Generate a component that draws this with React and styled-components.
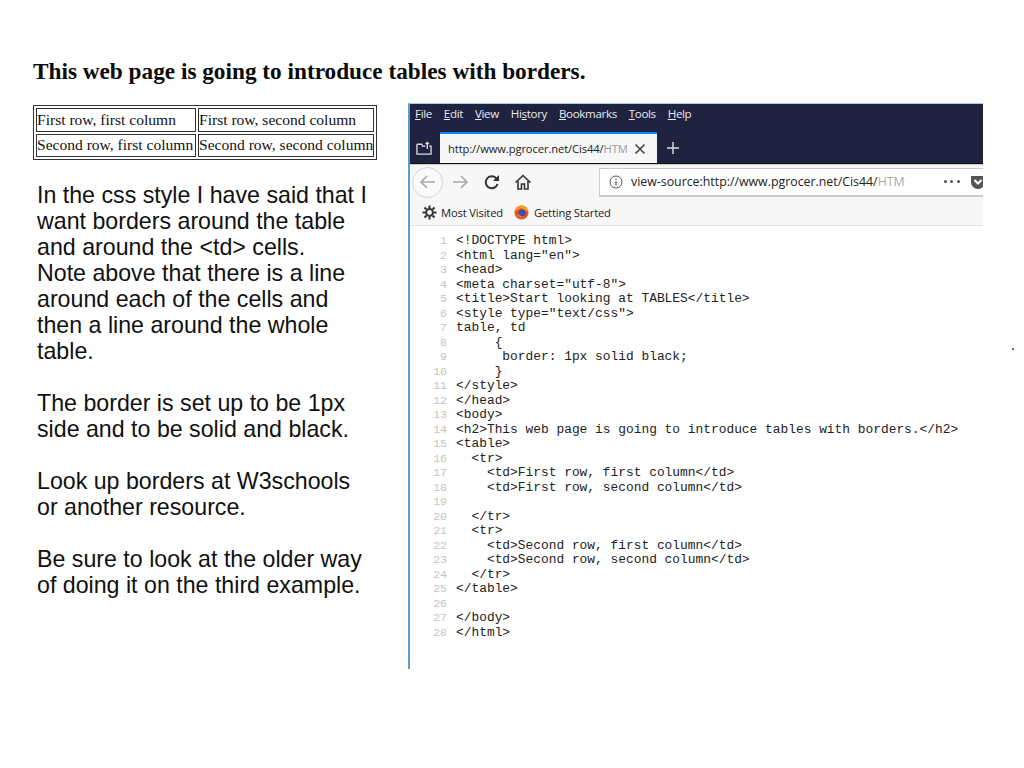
import React from "react";
import styled, { createGlobalStyle } from "styled-components";

const Global = createGlobalStyle`
  html, body { margin: 0; padding: 0; background: #fff; }
`;
const Slide = styled.div`
  width: 1024px; height: 768px; overflow: hidden; box-sizing: border-box; position: relative;
  padding: 58px 0 0 33px; background: #fff; color: #000;
`;
const Speck = styled.div`
  position: absolute; left: 1012px; top: 348px; width: 2px; height: 2px; background: #667;
`;
const Heading = styled.h2`
  margin: 0; font: bold 23.25px/26px "Liberation Serif", serif; color: #0a0a0a; white-space: nowrap; height: 26px;
`;
const Columns = styled.div`
  display: flex; align-items: flex-start; margin-top: 19px;
`;
const LeftColumn = styled.div`
  width: 375px; flex: none; margin-top: 2px;
`;
const DemoTable = styled.table`
  border: 1px solid #333; border-spacing: 2px; width: 343px; height: 55px; box-sizing: border-box;
  font: 15.55px/20px "Liberation Serif", serif; color: #111; table-layout: fixed; border-collapse: separate;
`;
const Cell = styled.td`
  border: 1px solid #333; padding: 0; white-space: nowrap; overflow: hidden;
  width: ${p => p.$w}px; height: 23px; box-sizing: border-box;
`;
const Notes = styled.div`
  margin: 22px 0 0 4px; font: 23.2px/26px "Liberation Sans", sans-serif; color: #111;
`;
const NoteLine = styled.div`
  white-space: nowrap; height: 26px;
`;
const Browser = styled.div`
  width: 575px; height: 566px; flex: none; overflow: hidden; box-sizing: border-box;
  border-left: 2px solid #5a9bd0; border-top: 1px solid #a8cfe8; display: flex; flex-direction: column; background: #fff;
  font-family: "Open Sans", "Liberation Sans", sans-serif;
`;
const MenuBar = styled.div`
  height: 28px; background: #1f2340; display: flex; align-items: flex-start; gap: 11.9px; padding: 2px 0 0 5px; flex: none;
  box-sizing: border-box; color: #e8e8ee; font-size: 11.6px; letter-spacing: -0.35px;
  u { text-underline-offset: 1px; }
`;
const TabBar = styled.div`
  height: 31px; background: #1f2340; display: flex; align-items: flex-end; flex: none; padding-left: 6px;
  border-bottom: 1px solid #111; box-sizing: content-box;
`;
const TabIcon = styled.div`
  width: 24px; height: 30px; display: flex; align-items: center;
`;
const Tab = styled.div`
  width: 217px; height: 29px; background: #f7f7f8; border-top: 2px solid #0a84ff; display: flex; align-items: center;
  justify-content: space-between; box-sizing: content-box; position: relative;
  font-size: 11.2px; color: #222; overflow: hidden;
`;
const TabTitle = styled.span`
  margin-left: 8px; white-space: nowrap; letter-spacing: -0.1px;
  em { font-style: normal; color: #999; }
`;
const TabClose = styled.div`
  width: 12px; height: 12px; margin-right: 11px; display: flex; flex: none;
`;
const NewTab = styled.div`
  width: 16px; height: 16px; margin: 0 0 7px 8px; display: flex;
`;
const ToolBar = styled.div`
  height: 34px; background: #f7f7f8; display: flex; align-items: center; flex: none; border-top: 1px solid #ccc; padding-left: 2px;
`;
const BackCircle = styled.div`
  width: 31px; height: 31px; border-radius: 50%; border: 1px solid #d4d4d6; background: #fafafa; box-sizing: border-box;
  display: flex; align-items: center; justify-content: center; flex: none;
`;
const NavIcon = styled.div`
  width: 18px; height: 18px; display: flex; margin-left: ${p => p.$ml}px; flex: none;
`;
const UrlBar = styled.div`
  width: 400px; height: 29px; margin-left: 67px; background: #fff; border: 1px solid #ccc; border-bottom-width: 2px; box-sizing: border-box;
  flex: none; display: flex; align-items: center; font-size: 12.35px; color: #222; white-space: nowrap; position: relative;
  em { font-style: normal; color: #aaa; }
`;
const InfoIcon = styled.div`
  width: 14px; height: 14px; margin: 0 8px 0 9px; display: flex; flex: none;
`;
const Dots = styled.div`
  width: 16px; display: flex; justify-content: space-between; margin-left: 39px; flex: none;
  span { width: 3px; height: 3px; background: #555; border-radius: 50%; }
`;
const BookmarkBar = styled.div`
  height: 27px; background: #f7f7f8; display: flex; align-items: center; flex: none; border-bottom: 1px solid #e3e3e3;
  padding-left: 12px; font-size: 11.2px; color: #222; letter-spacing: -0.15px; box-sizing: border-box;
`;
const BookmarkIcon = styled.div`
  width: 15px; height: 15px; display: flex; margin-right: ${p => p.$mr}px; flex: none;
`;
const Bookmark = styled.span`
  margin-right: ${p => p.$mr}px; white-space: nowrap;
`;
const Source = styled.div`
  flex: 1; padding-top: 8px; background: #fff;
`;
const CodeLine = styled.div`
  display: flex; height: 14.52px; font: 12.88px/14.52px "Liberation Mono", monospace; color: #222; white-space: pre;
`;
const LineNo = styled.span`
  width: 37px; text-align: right; color: #c4c4c4; margin-right: 9px; flex: none; font-size: 11.5px;
`;

const code = [
  "<!DOCTYPE html>", '<html lang="en">', "<head>", '<meta charset="utf-8">',
  "<title>Start looking at TABLES</title>", '<style type="text/css">', "table, td",
  "     {", "      border: 1px solid black;", "     }", "</style>", "</head>", "<body>",
  "<h2>This web page is going to introduce tables with borders.</h2>", "<table>",
  "  <tr>", "    <td>First row, first column</td>", "    <td>First row, second column</td>", "",
  "  </tr>", "  <tr>", "    <td>Second row, first column</td>", "    <td>Second row, second column</td>",
  "  </tr>", "</table>", "", "</body>", "</html>",
];
const notes = [
  "In the css style I have said that I", "want borders around the table", "and around the <td> cells.",
  "Note above that there is a line", "around each of the cells and", "then a line around the whole", "table.", "\u00a0",
  "The border is set up to be 1px", "side and to be solid and black.", "\u00a0",
  "Look up borders at W3schools", "or another resource.", "\u00a0",
  "Be sure to look at the older way", "of doing it on the third example.",
];

export default function App() {
  return (
    <Slide>
      <Global />
      <Heading>This web page is going to introduce tables with borders.</Heading>
      <Columns>
        <LeftColumn>
          <DemoTable>
            <tbody>
              <tr><Cell $w={160}>First row, first column</Cell><Cell $w={176}>First row, second column</Cell></tr>
              <tr><Cell $w={160}>Second row, first column</Cell><Cell $w={176}>Second row, second column</Cell></tr>
            </tbody>
          </DemoTable>
          <Notes>{notes.map((n, i) => <NoteLine key={i}>{n}</NoteLine>)}</Notes>
        </LeftColumn>
        <Browser>
          <MenuBar>
            <span><u>F</u>ile</span><span><u>E</u>dit</span><span><u>V</u>iew</span><span>Hi<u>s</u>tory</span>
            <span><u>B</u>ookmarks</span><span><u>T</u>ools</span><span><u>H</u>elp</span>
          </MenuBar>
          <TabBar>
            <TabIcon>
              <svg width="16" height="15" viewBox="0 0 17 15" fill="none" stroke="#ddd" strokeWidth="1.4">
                <path d="M1 3h5l1 2h3M14 5h2v8.500H1V3" /><path d="M12 8V1M10.200 2.800 12 1l1.800 1.800" />
              </svg>
            </TabIcon>
            <Tab>
              <TabTitle>http://www.pgrocer.net/Cis44/<em>HTM</em></TabTitle>
              <TabClose>
                <svg width="12" height="12" viewBox="0 0 12 12" stroke="#444" strokeWidth="1.6"><path d="M1.500 1.500l9 9M10.500 1.500l-9 9" /></svg>
              </TabClose>
            </Tab>
            <NewTab>
              <svg width="16" height="16" viewBox="0 0 16 16" stroke="#ddd" strokeWidth="1.4"><path d="M8 2v12M2 8h12" /></svg>
            </NewTab>
          </TabBar>
          <ToolBar>
            <BackCircle>
              <svg width="18" height="18" viewBox="0 0 18 18" fill="none" stroke="#aaa" strokeWidth="1.6"><path d="M16 9H2M8 3 2 9l6 6" /></svg>
            </BackCircle>
            <NavIcon $ml={8}>
              <svg width="18" height="18" viewBox="0 0 18 18" fill="none" stroke="#aaa" strokeWidth="1.6"><path d="M2 9h14M10 3l6 6-6 6" /></svg>
            </NavIcon>
            <NavIcon $ml={14}>
              <svg width="18" height="18" viewBox="0 0 18 18" fill="none" stroke="#333" strokeWidth="2"><path d="M14.500 11a6 6 0 1 1-1.500-6l2 2" /><path d="M16 2v6h-6" fill="#333" stroke="none" /></svg>
            </NavIcon>
            <NavIcon $ml={13}>
              <svg width="18" height="18" viewBox="0 0 18 18" fill="none" stroke="#333" strokeWidth="1.6"><path d="M1.500 9.500 9 2.500l7.500 7" /><path d="M4 8v8h3.500v-5h3v5H14V8" /></svg>
            </NavIcon>
            <UrlBar>
              <InfoIcon>
                <svg width="14" height="14" viewBox="0 0 14 14" fill="none" stroke="#555" strokeWidth="1"><circle cx="7" cy="7" r="6" /><path d="M7 6.200v4M7 3.600v1.200" strokeWidth="1.300" /></svg>
              </InfoIcon>
              <span>view-source:http://www.pgrocer.net/Cis44/<em>HTM</em></span>
              <Dots><span /><span /><span /></Dots>
              <NavIcon $ml={9}>
                <svg width="18" height="18" viewBox="0 0 18 18"><path d="M2 3h14v6a7 7 0 0 1-14 0z" fill="#555" /><path d="M5.500 7 9 10.500 12.500 7" fill="none" stroke="#fff" strokeWidth="2" /></svg>
              </NavIcon>
            </UrlBar>
          </ToolBar>
          <BookmarkBar>
            <BookmarkIcon $mr={4}>
              <svg width="15" height="15" viewBox="0 0 15 15" fill="none" stroke="#333"><circle cx="7.500" cy="7.500" r="3.400" strokeWidth="2" /><path d="M7.500 0.500v3M7.500 11.500v3M0.500 7.500h3M11.500 7.500h3M2.500 2.500l2 2M10.500 10.500l2 2M12.500 2.500l-2 2M4.500 10.500l-2 2" strokeWidth="2" /></svg>
            </BookmarkIcon>
            <Bookmark $mr={11}>Most Visited</Bookmark>
            <BookmarkIcon $mr={5}>
              <svg width="15" height="15" viewBox="0 0 15 15"><circle cx="7.500" cy="7.500" r="7" fill="#e8501f" /><path d="M1 6C2 2 6 0 9 .7c3 .8 5 3.300 5.200 5.800L11 5 7 3z" fill="#f9a11b" /><circle cx="8" cy="8" r="3.600" fill="#3b4bb8" /><path d="M2.500 10c2 3 6 3.500 8.500 1.500-2 .3-4.500 0-5.500-2z" fill="#f5701e" /></svg>
            </BookmarkIcon>
            <Bookmark>Getting Started</Bookmark>
          </BookmarkBar>
          <Source>
            {code.map((c, i) => (
              <CodeLine key={i}><LineNo>{i + 1}</LineNo>{c}</CodeLine>
            ))}
          </Source>
        </Browser>
      </Columns>
      <Speck />
    </Slide>
  );
}
